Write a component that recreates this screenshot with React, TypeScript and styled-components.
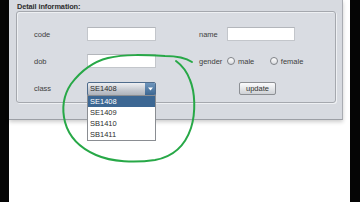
import React from "react";
import styled, { createGlobalStyle } from "styled-components";

const Global = createGlobalStyle`
  html, body { margin: 0; padding: 0; background: #ffffff; }
  body { width: 360px; height: 202px; overflow: hidden; font-family: "Liberation Sans", Arial, sans-serif; }
  #root { width: 360px; height: 202px; }
`;

const Screen = styled.div`
  position: relative;
  display: flex;
  width: 360px;
  height: 202px;
  background: #fff;
`;

const BlackBar = styled.div<{ $w: number }>`
  width: ${(p) => p.$w}px;
  flex: none;
  background: #050505;
`;

const Middle = styled.div`
  flex: 1;
  display: flex;
  flex-direction: column;
  background: #ffffff;
`;

const Window = styled.div`
  width: 334px;
  height: 120px;
  background: #d7dae0;
  border-right: 1px solid #a9acb2;
  border-bottom: 1px solid #9c9fa5;
  box-shadow: 0 2px 4px rgba(0, 0, 0, 0.2);
  display: flex;
  flex-direction: column;
  box-sizing: border-box;
  padding: 1px 0 0 7px;
`;

const Title = styled.div`
  font-size: 7.4px;
  font-weight: bold;
  color: #2e2e2e;
  height: 10px;
  line-height: 11px;
  padding-left: 1px;
  letter-spacing: -0.1px;
`;

const Box = styled.div`
  width: 320px;
  height: 92px;
  box-sizing: border-box;
  border: 1px solid #a5a8ae;
  border-radius: 3px;
  box-shadow: inset 1px 1px 0 #eef0f3, 1px 1px 0 #eef0f3;
  background: #d9dce2;
  display: grid;
  grid-template-columns: 53px 69px 43px 28px 80px;
  grid-template-rows: 14px 14px 14px;
  row-gap: 13px;
  padding: 15px 0 0 17px;
  align-items: center;
`;

const Label = styled.div<{ $col: number }>`
  grid-column: ${(p) => p.$col};
  font-size: 7.5px;
  color: #404040;
  white-space: nowrap;
`;

const TextInput = styled.div<{ $col: number }>`
  grid-column: ${(p) => p.$col};
  height: 14px;
  box-sizing: border-box;
  background: #ffffff;
  border: 1px solid #c3c6cb;
  border-top-color: #b3b6bb;
  width: ${(p) => (p.$col === 5 ? 68 : 69)}px;
`;

const RadioGroup = styled.div`
  grid-column: 5;
  display: flex;
  align-items: center;
  font-size: 7.5px;
  color: #404040;
`;

const RadioItem = styled.div<{ $w: number }>`
  display: flex;
  align-items: center;
  gap: 3px;
  width: ${(p) => p.$w}px;
  white-space: nowrap;
`;

const RadioCircle = styled.span`
  width: 8px;
  height: 8px;
  box-sizing: border-box;
  border-radius: 50%;
  border: 1px solid #7f8287;
  background: linear-gradient(#ffffff, #d9dbdf);
  flex: none;
`;

const ComboWrap = styled.div`
  grid-column: 2;
  position: relative;
  height: 14px;
  margin-top: 1px;
`;

const Combo = styled.div`
  height: 14px;
  box-sizing: border-box;
  border: 1px solid #4f6c8c;
  border-radius: 2px;
  background: linear-gradient(#eef0f3, #c4c8cf 60%, #aeb3bb);
  display: flex;
  align-items: center;
  overflow: hidden;
`;

const ComboText = styled.span`
  flex: 1;
  padding-left: 2px;
  font-size: 7.5px;
  color: #2b2b2b;
`;

const ComboButton = styled.span`
  width: 10px;
  height: 100%;
  background: linear-gradient(#6f96bd, #3d6792);
  display: flex;
  align-items: center;
  justify-content: center;
`;

const Menu = styled.div`
  position: absolute;
  top: 13px;
  left: 0;
  width: 69px;
  box-sizing: border-box;
  border: 1px solid #8a8d92;
  background: #ffffff;
  z-index: 2;
`;

const MenuItem = styled.div<{ $sel?: boolean }>`
  height: 11px;
  line-height: 11px;
  padding-left: 2px;
  font-size: 7.5px;
  color: ${(p) => (p.$sel ? "#ffffff" : "#2b2b2b")};
  background: ${(p) => (p.$sel ? "#3c6793" : "transparent")};
`;

const ButtonCell = styled.div`
  grid-column: 4 / span 2;
  padding-left: 40px;
  display: flex;
`;

const Button = styled.div`
  width: 37px;
  height: 13px;
  box-sizing: border-box;
  border: 1px solid #8c8f94;
  border-radius: 2px;
  background: linear-gradient(#fbfbfc, #e3e5e8 55%, #cfd2d6);
  font-size: 7.5px;
  color: #333;
  display: flex;
  align-items: center;
  justify-content: center;
`;

const Annotation = styled.svg`
  position: absolute;
  left: 0;
  top: 0;
  width: 360px;
  height: 202px;
  pointer-events: none;
  z-index: 5;
`;

export default function App() {
  return (
    <>
      <Global />
      <Screen>
        <BlackBar $w={9} />
        <Middle>
          <Window>
            <Title>Detail information:</Title>
            <Box>
              <Label $col={1}>code</Label>
              <TextInput $col={2} />
              <Label $col={4}>name</Label>
              <TextInput $col={5} />

              <Label $col={1}>dob</Label>
              <TextInput $col={2} />
              <Label $col={4}>gender</Label>
              <RadioGroup>
                <RadioItem $w={46}>
                  <RadioCircle />
                  male
                </RadioItem>
                <RadioItem $w={40}>
                  <RadioCircle />
                  female
                </RadioItem>
              </RadioGroup>

              <Label $col={1}>class</Label>
              <ComboWrap>
                <Combo>
                  <ComboText>SE1408</ComboText>
                  <ComboButton>
                    <svg width="5" height="4" viewBox="0 0 5 4">
                      <path d="M0 0.5 L5 0.5 L2.5 3.5 Z" fill="#ffffff" />
                    </svg>
                  </ComboButton>
                </Combo>
                <Menu>
                  <MenuItem $sel>SE1408</MenuItem>
                  <MenuItem>SE1409</MenuItem>
                  <MenuItem>SB1410</MenuItem>
                  <MenuItem>SB1411</MenuItem>
                </Menu>
              </ComboWrap>
              <ButtonCell>
                <Button>update</Button>
              </ButtonCell>
            </Box>
          </Window>
        </Middle>
        <BlackBar $w={10} />
        <Annotation viewBox="0 0 360 202">
          <path
            d="M192 62 C 186 58, 178 56, 165 56 C 145 55, 125 54, 108 58 C 92 62, 80 72, 71 84 C 63 96, 62 110, 65 122 C 69 137, 80 148, 96 155 C 112 162, 135 163, 155 160 C 172 157, 185 146, 191 128 C 196 112, 195 92, 190 80 C 187 72, 183 66, 176 61"
            fill="none"
            stroke="#27a847"
            strokeWidth="2"
            strokeLinecap="round"
          />
        </Annotation>
      </Screen>
    </>
  );
}
